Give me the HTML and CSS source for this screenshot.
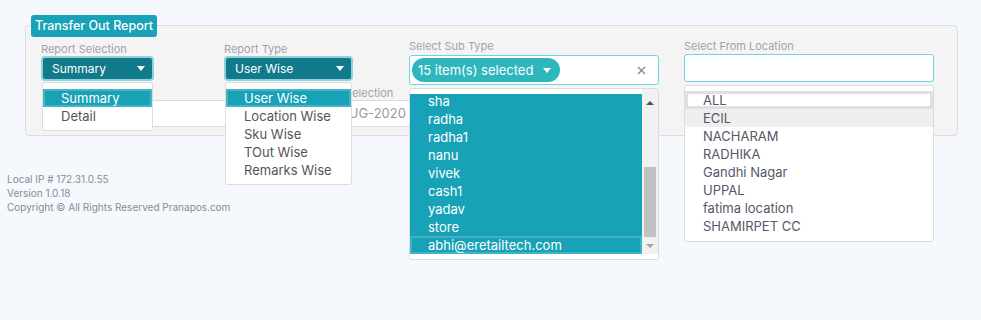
FILE: index.html
```html
<!DOCTYPE html>
<html lang="en">
<head>
  <meta charset="UTF-8">
  <title>Transfer Out Report</title>
  <link rel="stylesheet" href="styles.css">
</head>
<body>
  <div class="panel">
    <div class="legend">Transfer Out Report</div>

    <div class="filters">
      <div class="field field-btn">
        <label class="lbl">Report Selection</label>
        <div class="btn-select w-report"><span>Summary</span><span class="caret"></span></div>
        <ul class="menu menu-report">
          <li class="active">Summary</li>
          <li>Detail</li>
        </ul>
      </div>

      <div class="field field-btn">
        <label class="lbl">Report Type</label>
        <div class="btn-select w-type"><span>User Wise</span><span class="caret"></span></div>
        <ul class="menu menu-type">
          <li class="active">User Wise</li>
          <li>Location Wise</li>
          <li>Sku Wise</li>
          <li>TOut Wise</li>
          <li>Remarks Wise</li>
        </ul>
      </div>

      <div class="field">
        <label class="lbl">Select Sub Type</label>
        <div class="multi">
          <span class="pill">15 item(s) selected <span class="caret"></span></span>
          <svg class="clear" width="9" height="9" viewBox="0 0 9 9"><path d="M1 1L8 8M8 1L1 8" stroke="#888" stroke-width="1.4"/></svg>
        </div>
        <div class="menu menu-sub">
          <div class="opts">
            <ul>
              <li>sha</li>
              <li>radha</li>
              <li>radha1</li>
              <li>nanu</li>
              <li>vivek</li>
              <li>cash1</li>
              <li>yadav</li>
              <li>store</li>
              <li class="focus">abhi@eretailtech.com</li>
            </ul>
          </div>
          <div class="sbar">
            <span class="arr-up"></span>
            <span class="thumb"></span>
            <span class="arr-down"></span>
          </div>
        </div>
      </div>

      <div class="field field-loc">
        <label class="lbl">Select From Location</label>
        <div class="search"></div>
        <ul class="menu menu-loc">
          <li class="focus">ALL</li>
          <li class="hover">ECIL</li>
          <li>NACHARAM</li>
          <li>RADHIKA</li>
          <li>Gandhi Nagar</li>
          <li>UPPAL</li>
          <li>fatima location</li>
          <li>SHAMIRPET CC</li>
        </ul>
      </div>
    </div>

    <div class="dates">
      <div class="field date-a">
        <label class="lbl">&nbsp;</label>
        <div class="text-input"></div>
      </div>
      <div class="field date-b">
        <label class="lbl">Date Selection</label>
        <div class="text-input">01-AUG-2020 To 31-AUG-2020</div>
      </div>
    </div>
  </div>

  <div class="footer">
    <div>Local IP # 172.31.0.55</div>
    <div>Version 1.0.18</div>
    <div>Copyright &copy; All Rights Reserved Pranapos.com</div>
  </div>
</body>
</html>
```

FILE: styles.css
```css
html,
body {
  min-height: 320px;
}

body {
  margin: 0;
  background-color: #f5f8fd;
  font-family: Inter, "Noto Sans", sans-serif;
  color: #555;
}

ul {
  list-style: none;
  margin: 0;
  padding: 0;
}

.panel {
  margin: 25px 23px 0 25px;
  padding: 0 15px 8px;
  background-color: #f4f4f4;
  border: 1px solid #dcdcdc;
  border-radius: 4px;
}

.legend {
  width: fit-content;
  margin: -11px 0 0 -10px;
  padding: 0 4px;
  line-height: 22px;
  font-size: 12.5px;
  font-weight: 500;
  color: #fff;
  background-color: #17a2b8;
  border-radius: 3px;
}

.filters {
  display: grid;
  grid-template-columns: 183px 185px 275px 250px;
  margin-top: 2px;
}

.field {
  position: relative;
}

.field-btn {
  padding-top: 3px;
}

.lbl {
  display: block;
  font-size: 11px;
  line-height: 14px;
  color: #a2a2aa;
  white-space: nowrap;
}

.btn-select {
  display: flex;
  align-items: center;
  justify-content: space-between;
  box-sizing: border-box;
  height: 25px;
  padding: 0 7px 0 9px;
  font-size: 12px;
  color: #fff;
  background-color: #117a8b;
  border: 2px solid #8fd2dc;
  border-radius: 4px;
}

.w-report {
  width: 113px;
}

.w-type {
  width: 129px;
}

.caret {
  display: inline-block;
  width: 0;
  height: 0;
  border-left: 4px solid transparent;
  border-right: 4px solid transparent;
  border-top: 5px solid #fff;
}

.multi {
  display: flex;
  align-items: center;
  justify-content: space-between;
  box-sizing: border-box;
  width: 250px;
  height: 30px;
  margin-top: 2px;
  padding: 0 12px 0 2px;
  background-color: #fff;
  border: 1px solid #6ad7e4;
  border-radius: 3px;
}

.pill {
  display: flex;
  align-items: center;
  justify-content: space-between;
  box-sizing: border-box;
  width: 148px;
  height: 24px;
  padding: 0 9px 0 6px;
  font-size: 13px;
  color: #fff;
  background-color: #2db6bb;
  border-radius: 12px;
}

.search {
  box-sizing: border-box;
  width: 250px;
  height: 28px;
  margin-top: 1px;
  background-color: #fff;
  border: 1px solid #6ad7e4;
  border-radius: 3px;
}

.menu {
  position: absolute;
  z-index: 10;
  box-sizing: border-box;
  background-color: #fff;
  border: 1px solid #dcdcdc;
  border-radius: 3px;
  font-size: 13px;
}

.menu li {
  height: 18px;
  line-height: 18px;
  padding-left: 18px;
  white-space: nowrap;
}

.menu-report,
.menu-type {
  top: 43px;
  left: 1px;
  padding: 6px 0 5px;
}

.menu-report {
  width: 111px;
}

.menu-type {
  width: 127px;
}

.menu-report li.active,
.menu-type li.active {
  color: #fff;
  background-color: #17a2b8;
  box-shadow: inset 0 0 0 2px #45b5c6;
}

.menu-sub {
  top: 49px;
  left: 0;
  display: flex;
  width: 250px;
  height: 172px;
  color: #fff;
}

.opts {
  width: 232px;
  padding-top: 5px;
}

.opts ul {
  height: 160px;
  overflow: hidden;
  background-color: #17a2b8;
}

.opts li {
  position: relative;
  top: -2px;
}

.opts li.focus {
  box-shadow: inset 0 0 0 2px #3fb2c3;
}

.sbar {
  display: flex;
  flex-direction: column;
  align-items: center;
  width: 16px;
  height: 165px;
  background-color: #f1f1f1;
}

.arr-up,
.arr-down {
  width: 0;
  height: 0;
  border-left: 4px solid transparent;
  border-right: 4px solid transparent;
}

.arr-up {
  margin-top: 12px;
  border-bottom: 4px solid #505050;
}

.thumb {
  width: 12px;
  height: 70px;
  margin-top: 62px;
  background-color: #c1c1c1;
}

.arr-down {
  margin-top: 7px;
  border-top: 4px solid #a3a3a3;
}

.menu-loc {
  top: 46px;
  left: 0;
  width: 250px;
  padding: 5px 0 6px;
  color: #575767;
}

.menu-loc li.focus {
  background-color: #fff;
  box-shadow: inset 0 0 0 3px #e0e0e0;
}

.menu-loc li.hover {
  background-color: #efefef;
}

.dates {
  display: flex;
  margin-top: 1px;
}

.date-a {
  width: 255px;
  margin-left: 2px;
}

.date-b {
  width: 332px;
  margin-left: 20px;
}

.text-input {
  box-sizing: border-box;
  height: 27px;
  padding: 0 10px;
  line-height: 25px;
  font-size: 13px;
  color: #9a9aa2;
  background-color: #fff;
  border: 1px solid #dcdcdc;
  border-radius: 3px;
}

.date-b .text-input {
  padding-left: 2px;
}

.footer {
  margin-top: 36px;
  padding-left: 7px;
  font-size: 10px;
  line-height: 14px;
  color: #8a8a96;
}
```
